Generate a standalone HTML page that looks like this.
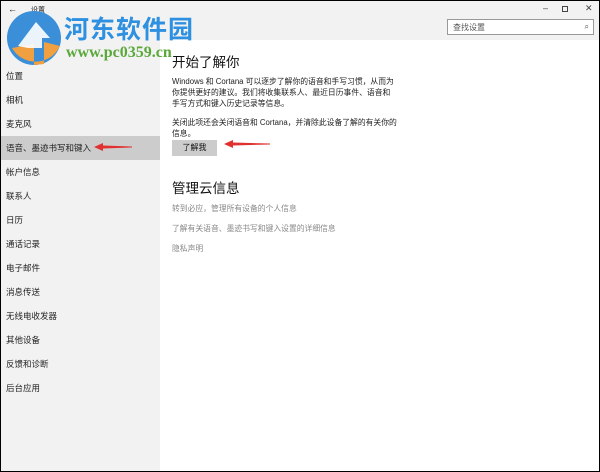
<!DOCTYPE html>
<html><head><meta charset="utf-8"><style>
*{margin:0;padding:0;box-sizing:border-box}
body{width:600px;height:472px;overflow:hidden;font-family:"Liberation Sans","Noto Sans CJK SC",sans-serif;background:#fff;position:relative}
.frame{position:absolute;inset:0;border:1px solid #000;pointer-events:none;z-index:20}
.top{position:absolute;left:0;top:0;width:600px;height:40px;background:#f2f2f2}
.side{position:absolute;left:0;top:40px;width:160px;height:432px;background:#f2f2f2}
.it{position:absolute;left:6px;font-size:8.5px;color:#222;line-height:12px}
.sel{position:absolute;left:0;top:136px;width:160px;height:24px;background:#cccccc}
.t{position:absolute;color:#111}
.p{position:absolute;left:172px;font-size:7.8px;line-height:11px;color:#222;width:225px}
.g{position:absolute;left:172px;font-size:7.8px;color:#888}
</style></head><body>
<div class="top"></div>
<div class="t" style="left:8px;top:4px;font-size:9px">←</div>
<div class="t" style="left:31px;top:5px;font-size:7px">设置</div>
<div class="t" style="left:543px;top:3px;font-size:9px;color:#444">–</div>
<div style="position:absolute;left:562px;top:6px;width:6px;height:6px;border:1px solid #444"></div>
<div class="t" style="left:585px;top:3px;font-size:9px;color:#444">✕</div>
<div style="position:absolute;left:447px;top:19px;width:147px;height:16px;border:1px solid #999;background:#fff;font-size:8px;color:#555;padding:2px 0 0 5px">查找设置<span style="position:absolute;right:4px;top:2px">⌕</span></div>
<div class="side"></div>
<div class="sel"></div>
<div class="it" style="top:70px">位置</div>
<div class="it" style="top:94px">相机</div>
<div class="it" style="top:118px">麦克风</div>
<div class="it" style="top:142px">语音、墨迹书写和键入</div>
<div class="it" style="top:166px">帐户信息</div>
<div class="it" style="top:190px">联系人</div>
<div class="it" style="top:214px">日历</div>
<div class="it" style="top:238px">通话记录</div>
<div class="it" style="top:262px">电子邮件</div>
<div class="it" style="top:286px">消息传送</div>
<div class="it" style="top:310px">无线电收发器</div>
<div class="it" style="top:334px">其他设备</div>
<div class="it" style="top:358px">反馈和诊断</div>
<div class="it" style="top:382px">后台应用</div>
<svg style="position:absolute;left:92px;top:142px" width="42" height="10"><path d="M2 5 L11 1 L11 3.5 L40 4.5 L40 5.5 L11 6.5 L11 9Z" fill="#e03030"/></svg>
<svg style="position:absolute;left:222px;top:139px" width="50" height="10"><path d="M2 5 L11 1 L11 3.5 L48 4.5 L48 5.5 L11 6.5 L11 9Z" fill="#e03030"/></svg>
<div class="t" style="left:172px;top:51px;font-size:13.5px">开始了解你</div>
<div class="p" style="top:76px">Windows 和 Cortana 可以逐步了解你的语音和手写习惯，从而为你提供更好的建议。我们将收集联系人、最近日历事件、语音和手写方式和键入历史记录等信息。</div>
<div class="p" style="top:117px">关闭此项还会关闭语音和 Cortana，并清除此设备了解的有关你的信息。</div>
<div style="position:absolute;left:172px;top:140px;width:45px;height:16px;background:#cccccc;font-size:8px;color:#111;text-align:center;line-height:16px">了解我</div>
<div class="t" style="left:172px;top:177px;font-size:13.5px">管理云信息</div>
<div class="g" style="top:203px">转到必应，管理所有设备的个人信息</div>
<div class="g" style="top:223px">了解有关语音、墨迹书写和键入设置的详细信息</div>
<div class="g" style="top:243px">隐私声明</div>
<svg style="position:absolute;left:4px;top:8px" width="60" height="60"><circle cx="30" cy="30" r="27" fill="#3a8fd8"/><path d="M8 40 A27 27 0 0 0 56 38 L40 34 L40 56 L30 57 L30 36 Z" fill="#f0a040"/><path d="M14 38 L32 14 L46 30 L38 30 L38 40 L24 40 Z" fill="#fff" opacity=".9"/></svg>
<div class="t" style="left:64px;top:10px;font-size:25px;font-weight:bold;color:#2e90e0;letter-spacing:1px">河东软件园</div>
<div class="t" style="left:66px;top:44px;font-size:16px;font-weight:bold;color:#5aa83a;font-family:'Liberation Serif',serif">www.pc0359.cn</div>
<div class="frame"></div>
</body></html>
